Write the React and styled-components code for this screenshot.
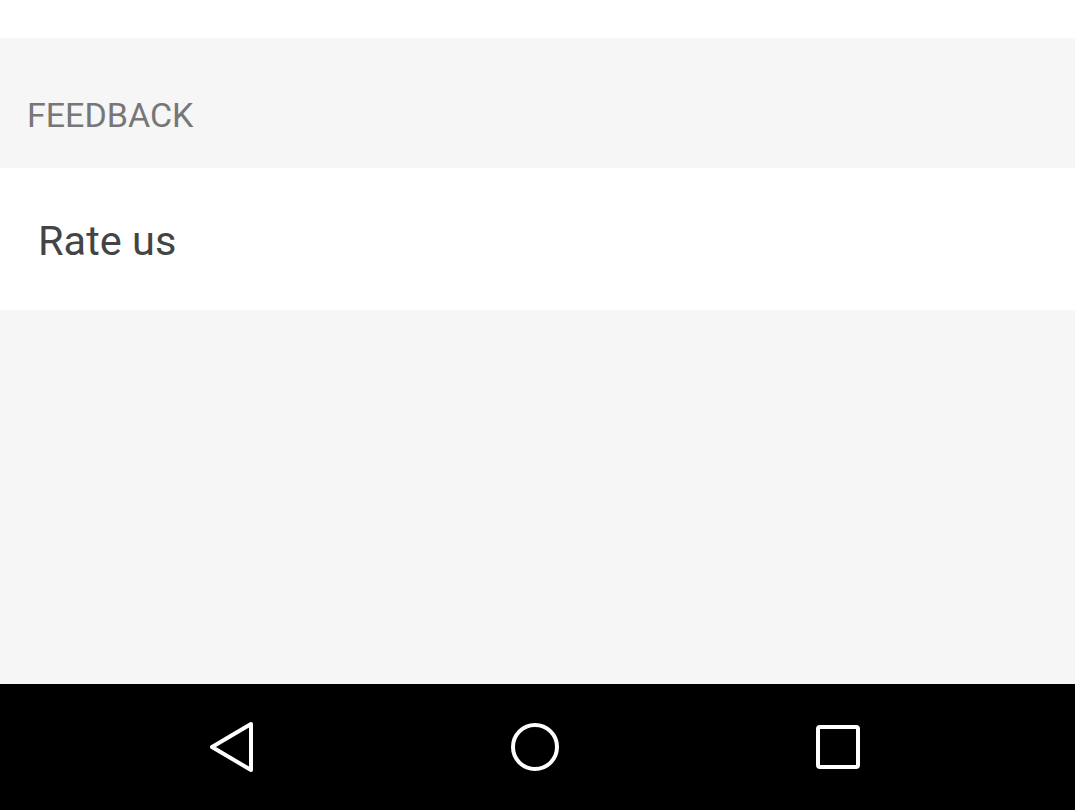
import React from "react";
import styled, { createGlobalStyle } from "styled-components";

const GlobalStyle = createGlobalStyle`
	html, body {
		margin: 0;
		padding: 0;
		background: #f6f6f6;
	}
	body {
		font-family: Roboto, "Noto Sans", "Liberation Sans", sans-serif;
	}
`;

const Screen = styled.div`
	display: flex;
	flex-direction: column;
	width: 1075px;
	height: 810px;
	background: #f6f6f6;
	overflow: hidden;
`;

const TopStrip = styled.div`
	height: 38px;
	background: #ffffff;
`;

const SectionHeader = styled.div`
	display: flex;
	align-items: center;
	height: 130px;
	padding: 24px 27px 0;
	box-sizing: border-box;
	font-size: 34px;
	color: #777777;
`;

const Item = styled.div`
	display: flex;
	align-items: center;
	height: 142px;
	padding: 2px 38px 0;
	box-sizing: border-box;
	background: #ffffff;
	font-size: 41.5px;
	color: #444444;
`;

const Filler = styled.div`
	flex: 1;
`;

const NavBar = styled.nav`
	display: flex;
	align-items: center;
	justify-content: center;
	gap: 193px;
	height: 126px;
	padding-right: 5px;
	background: #000000;
`;

const NavButton = styled.div`
	display: flex;
	align-items: center;
	justify-content: center;
	width: 110px;
	height: 110px;
`;

function App() {
	return (
		<>
			<GlobalStyle />
			<Screen>
				<TopStrip />
				<SectionHeader>FEEDBACK</SectionHeader>
				<Item>Rate us</Item>
				<Filler />
				<NavBar>
					<NavButton>
						<svg width="48" height="52" viewBox="0 0 48 52">
							<path
								d="M43 3 L4 26 L43 49 Z"
								fill="none"
								stroke="#fff"
								strokeWidth="4"
								strokeLinejoin="round"
							/>
						</svg>
					</NavButton>
					<NavButton>
						<svg width="52" height="52" viewBox="0 0 52 52">
							<circle cx="26" cy="26" r="22" fill="none" stroke="#fff" strokeWidth="4" />
						</svg>
					</NavButton>
					<NavButton>
						<svg width="46" height="46" viewBox="0 0 46 46">
							<rect x="3" y="3" width="40" height="40" rx="2" fill="none" stroke="#fff" strokeWidth="4" />
						</svg>
					</NavButton>
				</NavBar>
			</Screen>
		</>
	);
}

export default App;
